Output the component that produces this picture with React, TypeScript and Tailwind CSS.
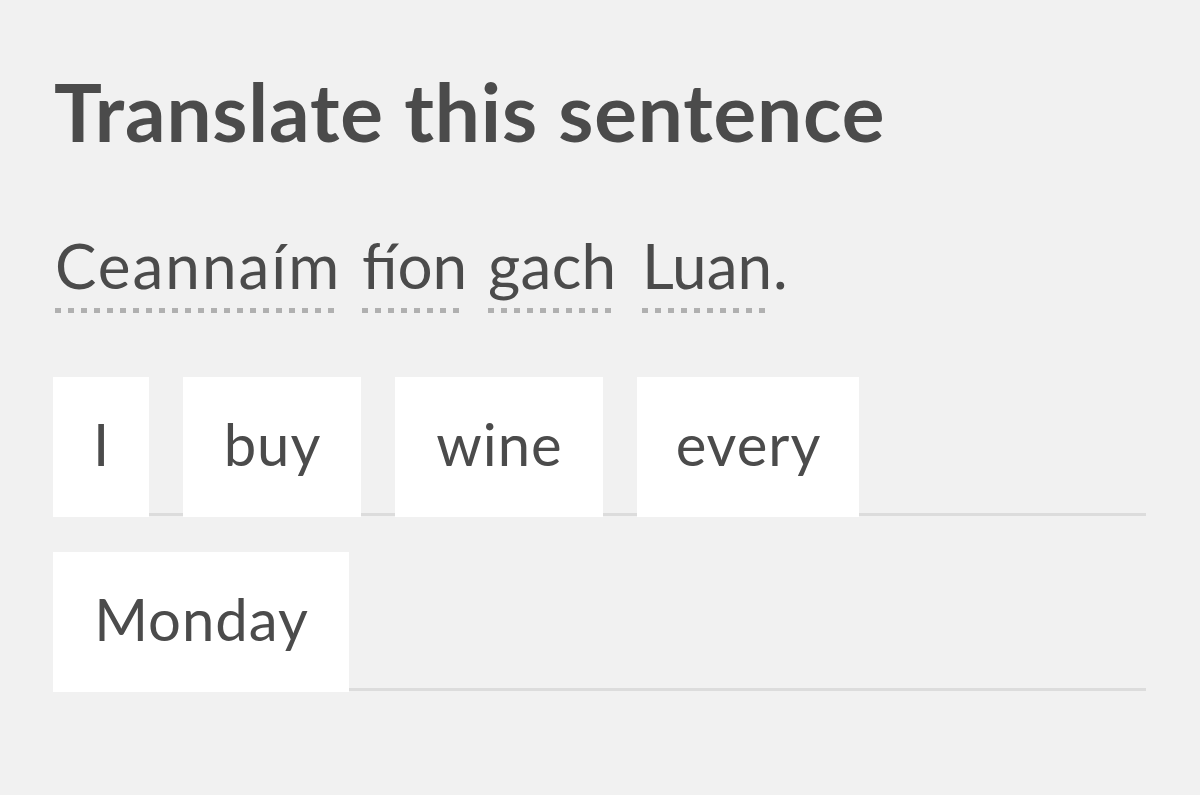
import React from "react";

const dots =
  "h-[5px] w-full bg-[repeating-linear-gradient(90deg,#b0b0b0_0px,#b0b0b0_6px,transparent_6px,transparent_13px)]";

const words = [
  { w: "Ceannaím", width: 285, cls: "tracking-[2px]", ml: "ml-0" },
  { w: "fíon", width: 100, cls: "tracking-[0px]", ml: "ml-[22px]" },
  { w: "gach", width: 127, cls: "tracking-[0.3px]", ml: "ml-[26px]" },
  { w: "Luan", width: 128, cls: "tracking-[0px]", ml: "ml-[27px]" },
];

function Tile({ text, width }: { text: string; width: number }) {
  return (
    <div
      className="h-[140px] -mb-[4px] bg-white flex items-center justify-center text-[58px] font-normal text-[#4b4b4b] leading-none tracking-[1px] pl-[1px]"
      style={{ width }}
    >
      <span className="-mt-[6px]">{text}</span>
    </div>
  );
}

export default function App() {
  return (
    <div className="w-[1200px] h-[795px] bg-[#f1f1f1] pl-[53px] pr-[54px] pt-[66px] font-['Lato',sans-serif] text-[#4b4b4b] overflow-hidden">
      <h1 className="text-[80px] font-bold leading-[90px] tracking-[0.85px] pl-[1px]">
        Translate this sentence
      </h1>
      <div className="mt-[78px] flex items-start text-[62px] font-normal leading-none pl-[2px]">
        {words.map((x, i) => (
          <div key={i} className={`flex flex-col ${x.ml}`} style={{ width: x.width }}>
            <span className={`whitespace-nowrap ${x.cls}`}>{x.w}</span>
            <div className={`mt-[12px] ${dots}`}></div>
          </div>
        ))}
        <span className="ml-[3px]">.</span>
      </div>
      <div className="mt-[64px] flex gap-[34px] border-b-[3px] border-[#dcdcdc]">
        <Tile text="I" width={96} />
        <Tile text="buy" width={178} />
        <Tile text="wine" width={208} />
        <Tile text="every" width={222} />
      </div>
      <div className="mt-[36px] flex gap-[34px] border-b-[3px] border-[#dcdcdc]">
        <Tile text="Monday" width={296} />
      </div>
    </div>
  );
}
